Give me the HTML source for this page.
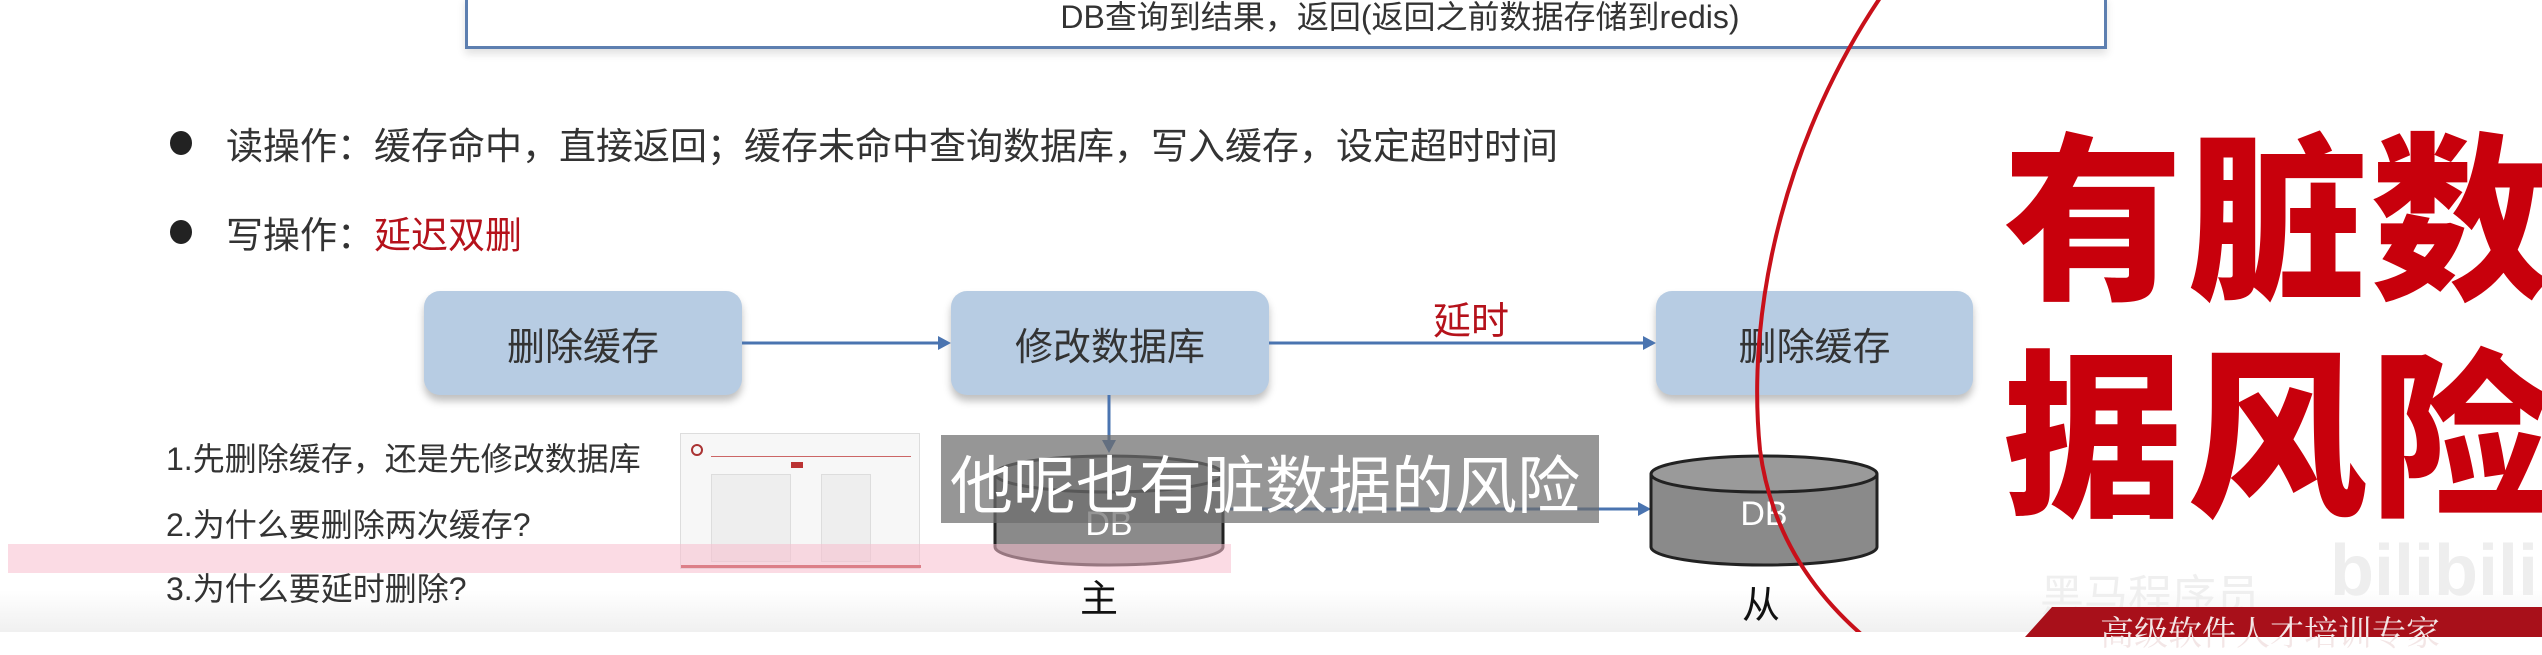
<!DOCTYPE html>
<html><head><meta charset="utf-8"><style>
*{margin:0;padding:0;box-sizing:border-box}
body{width:2542px;height:632px;overflow:hidden;background:#fff;position:relative;font-family:"Liberation Sans","Noto Sans CJK SC",sans-serif;color:#333}
.a{position:absolute;white-space:nowrap}
.box{position:absolute;background:#b7cce3;border-radius:16px;box-shadow:0 6px 8px rgba(0,0,0,.25);display:flex;align-items:center;justify-content:center;font-size:38px;color:#333}
.q{font-size:32px;color:#333;left:166px}
.big{font-size:180px;color:#c8000c;letter-spacing:4px;font-family:"Noto Sans CJK SC",sans-serif;font-weight:900;line-height:1.2}
</style></head><body>
<div class="a" style="left:0;top:590px;width:2542px;height:42px;background:linear-gradient(#fff,#f0f0f0)"></div>
<div class="a" style="left:465px;top:-4px;width:1642px;height:53px;border:3px solid #5d7fb0;border-top:none;box-shadow:0 5px 8px rgba(0,0,0,.12)"></div>
<div class="a" style="left:1400px;transform:translateX(-50%);top:-8px;font-size:32px;color:#333">DB查询到结果，返回(返回之前数据存储到redis)</div>

<div class="a" style="left:170px;top:131px;width:22px;height:24px;border-radius:50%;background:#222"></div>
<div class="a" style="left:226px;top:116px;font-size:37px">读操作：缓存命中，直接返回；缓存未命中查询数据库，写入缓存，设定超时时间</div>
<div class="a" style="left:170px;top:220px;width:22px;height:24px;border-radius:50%;background:#222"></div>
<div class="a" style="left:226px;top:205px;font-size:37px">写操作：<span style="color:#b5121b">延迟双删</span></div>

<div class="box" style="left:424px;top:291px;width:318px;height:104px">删除缓存</div>
<div class="box" style="left:951px;top:291px;width:318px;height:104px">修改数据库</div>
<div class="box" style="left:1656px;top:291px;width:317px;height:104px">删除缓存</div>
<div class="a" style="left:1433px;top:290px;font-size:38px;color:#b5121b">延时</div>

<svg class="a" style="left:0;top:0" width="2542" height="632">
<g stroke="#4a74b0" stroke-width="3" fill="#4a74b0">
<line x1="742" y1="343" x2="940" y2="343"/><polygon points="951,343 938,336 938,350" stroke="none"/>
<line x1="1269" y1="343" x2="1645" y2="343"/><polygon points="1656,343 1643,336 1643,350" stroke="none"/>
<line x1="1109" y1="395" x2="1109" y2="442"/><polygon points="1109,453 1102,440 1116,440" stroke="none"/>
<line x1="1230" y1="509" x2="1640" y2="509"/><polygon points="1651,509 1638,502 1638,516" stroke="none"/>
</g>
<g stroke="#222" stroke-width="3">
<path d="M995 474 V547 A114 18 0 0 0 1223 547 V474" fill="#8a8a8a"/>
<ellipse cx="1109" cy="474" rx="114" ry="18" fill="#9a9a9a"/>
<path d="M1651 474 V547 A113 18 0 0 0 1877 547 V474" fill="#8a8a8a"/>
<ellipse cx="1764" cy="474" rx="113" ry="18" fill="#9a9a9a"/>
</g>
<text x="1764" y="525" font-size="34" fill="#fff" text-anchor="middle" font-family="Liberation Sans">DB</text>
<text x="1109" y="535" font-size="34" fill="#fff" text-anchor="middle" font-family="Liberation Sans">DB</text>
</svg>
<div class="a" style="left:1080px;top:568px;font-size:38px;color:#111">主</div>
<div class="a" style="left:1742px;top:574px;font-size:38px;color:#111">从</div>

<div class="a q" style="top:434px">1.先删除缓存，还是先修改数据库</div>
<div class="a q" style="top:500px">2.为什么要删除两次缓存?</div>
<div class="a q" style="top:564px">3.为什么要延时删除?</div>

<div class="a" style="left:680px;top:433px;width:240px;height:136px;background:#f7f7f7;border:1px solid #ddd">
<div class="a" style="left:10px;top:10px;width:12px;height:12px;border:2px solid #a33;border-radius:50%"></div>
<div class="a" style="left:30px;top:22px;width:200px;height:1px;background:#c66"></div>
<div class="a" style="left:30px;top:40px;width:80px;height:88px;background:#eee;border:1px solid #ddd"></div>
<div class="a" style="left:140px;top:40px;width:50px;height:88px;background:#eee;border:1px solid #ddd"></div>
<div class="a" style="left:110px;top:28px;width:12px;height:6px;background:#b33"></div>
<div class="a" style="left:0;bottom:0;width:240px;height:3px;background:#b33"></div>
</div>

<div class="a" style="left:8px;top:544px;width:1223px;height:29px;background:rgba(248,190,205,.55)"></div>

<div class="a" style="left:941px;top:435px;width:658px;height:88px;background:rgba(110,110,110,.72)"></div>
<div class="a" style="left:950px;top:436px;font-size:63px;color:#fff">他呢也有脏数据的风险</div>

<svg class="a" style="left:0;top:0" width="2542" height="632">
<path d="M1882 -5 C1790 130 1745 300 1760 450 C1772 540 1820 600 1868 640" stroke="#c8101a" stroke-width="4" fill="none"/>
</svg>

<div class="a big" style="left:2003px;top:99px">有脏数</div>
<div class="a big" style="left:2003px;top:316px">据风险</div>

<div class="a" style="left:2040px;top:560px;font-size:44px;color:#eee;opacity:.9">黑马程序员</div>
<div class="a" style="left:2330px;top:530px;font-size:72px;font-weight:bold;color:#eee">bilibili</div>
<div class="a" style="left:2025px;top:607px;width:520px;height:30px;background:#a8101a;clip-path:polygon(27px 0,100% 0,100% 100%,0 100%)"></div>
<div class="a" style="left:2100px;top:606px;font-size:34px;color:#f3e6e6;font-family:'Noto Serif CJK SC',serif">高级软件人才培训专家</div>
</body></html>
